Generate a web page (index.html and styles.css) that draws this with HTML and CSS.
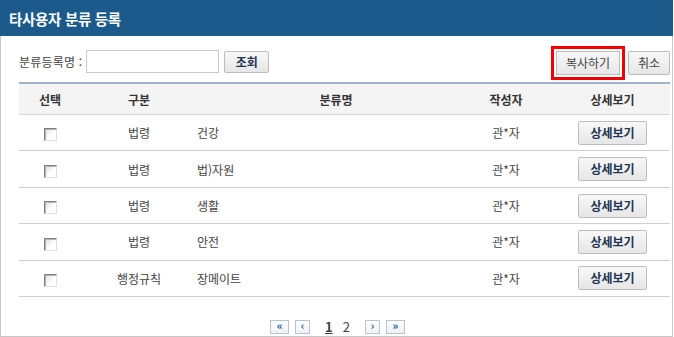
FILE: index.html
```html
<!DOCTYPE html>
<html lang="ko">
<head>
<meta charset="utf-8">
<title>타사용자 분류 등록</title>
<link rel="stylesheet" href="styles.css">
</head>
<body>
<div class="panel">
  <div class="titlebar"><h1 class="title">타사용자 분류 등록</h1></div>
  <div class="content">
    <div class="toolbar">
      <div class="search">
        <label class="label" for="q">분류등록명 :</label>
        <input id="q" class="input" type="text">
        <button class="btn btn-bold btn-search">조회</button>
      </div>
      <div class="actions">
        <button class="btn btn-copy">복사하기</button>
        <button class="btn btn-cancel">취소</button>
      </div>
    </div>
    <div class="table">
      <div class="row head">
        <div class="c c-sel">선택</div>
        <div class="c c-type">구분</div>
        <div class="c c-name c-name-h">분류명</div>
        <div class="c c-author">작성자</div>
        <div class="c c-view">상세보기</div>
      </div>
      <div class="row">
        <div class="c c-sel"><span class="chk"></span></div>
        <div class="c c-type">법령</div>
        <div class="c c-name">건강</div>
        <div class="c c-author">관*자</div>
        <div class="c c-view"><button class="btn btn-bold btn-view">상세보기</button></div>
      </div>
      <div class="row">
        <div class="c c-sel"><span class="chk"></span></div>
        <div class="c c-type">법령</div>
        <div class="c c-name">법)자원</div>
        <div class="c c-author">관*자</div>
        <div class="c c-view"><button class="btn btn-bold btn-view">상세보기</button></div>
      </div>
      <div class="row">
        <div class="c c-sel"><span class="chk"></span></div>
        <div class="c c-type">법령</div>
        <div class="c c-name">생활</div>
        <div class="c c-author">관*자</div>
        <div class="c c-view"><button class="btn btn-bold btn-view">상세보기</button></div>
      </div>
      <div class="row">
        <div class="c c-sel"><span class="chk"></span></div>
        <div class="c c-type">법령</div>
        <div class="c c-name">안전</div>
        <div class="c c-author">관*자</div>
        <div class="c c-view"><button class="btn btn-bold btn-view">상세보기</button></div>
      </div>
      <div class="row">
        <div class="c c-sel"><span class="chk"></span></div>
        <div class="c c-type">행정규칙</div>
        <div class="c c-name">장메이트</div>
        <div class="c c-author">관*자</div>
        <div class="c c-view"><button class="btn btn-bold btn-view">상세보기</button></div>
      </div>
    </div>
    <div class="pager">
      <span class="pg pg-wide">&laquo;</span>
      <span class="pg">&lsaquo;</span>
      <span class="num cur">1</span>
      <span class="num">2</span>
      <span class="pg">&rsaquo;</span>
      <span class="pg pg-wide">&raquo;</span>
    </div>
  </div>
</div>
</body>
</html>
```

FILE: styles.css
```css
* { box-sizing: border-box; }
html, body { margin: 0; padding: 0; background: #fff; }
body {
  font-family: "Noto Sans CJK KR", "Noto Sans", sans-serif;
  font-size: 12px;
  color: #444;
}
.panel {
  width: 673px;
  height: 337px;
  border: 1px solid #c8c8c8;
  border-top: none;
  display: flex;
  flex-direction: column;
}
.titlebar {
  height: 38px;
  background: #1b5a8b;
  display: flex;
  align-items: center;
  padding-left: 9px;
  margin: 0 -1px;
}
.title {
  margin: 0;
  color: #fff;
  font-size: 14.5px;
  font-weight: bold;
  letter-spacing: -0.3px;
}
.content {
  padding: 0 2px 0 18px;
  display: flex;
  flex-direction: column;
  flex: 1;
}
.toolbar {
  display: flex;
  justify-content: space-between;
  align-items: center;
  height: 46px;
  padding-top: 5px;
}
.search { display: flex; align-items: center; }
.label { color: #444; margin-right: 4px; letter-spacing: 0.2px; }
.input {
  width: 133px;
  height: 23px;
  border: 1px solid #c9c9c9;
  margin: 0 5px 0 0;
  padding: 0;
}
.btn {
  font-family: "Noto Sans CJK KR", "Noto Sans", sans-serif;
  font-size: 12px;
  border: 1px solid #bdbdbd;
  border-radius: 2px;
  background: linear-gradient(#f8f8f8, #e6e6e6);
  color: #444;
  padding: 0;
  line-height: 1;
  display: flex;
  align-items: center;
  justify-content: center;
}
.btn-bold { font-weight: bold; color: #1e3553; }
.btn-search { width: 45px; height: 22px; }
.actions { display: flex; align-items: center; gap: 8px; margin-top: 2px; }
.btn-copy {
  width: 64px;
  height: 24px;
  outline: 3px solid #f20000;
  outline-offset: 2px;
  border-radius: 0;
}
.btn-cancel { width: 42px; height: 24px; }
.table {
  border-top: 2px solid #9fb3c8;
}
.row {
  display: grid;
  grid-template-columns: 62px 116px 1fr 98px 115px;
  align-items: center;
  height: 36.4px;
  border-bottom: 1px solid #cfcfcf;
}
.row.head {
  height: 31px;
  background: #f4f4f4;
  font-weight: bold;
  color: #333;
  border-bottom: 1px solid #d6d6d6;
}
.c { text-align: center; }
.c-name { text-align: left; }
.c-name-h { text-align: center; padding-left: 18px; }
.c-view { display: flex; justify-content: center; }
.btn-view { width: 69px; height: 24px; }
.chk {
  display: inline-block;
  width: 13px;
  height: 13px;
  vertical-align: middle;
  border: 1px solid;
  border-color: #7f7f7f #e0e0e0 #e0e0e0 #7f7f7f;
  background: linear-gradient(135deg, #dcdcdc, #ffffff 60%);
  box-shadow: inset 1px 1px 0 #b5b5b5;
}
.pager {
  margin-top: 20px;
  display: flex;
  justify-content: center;
  align-items: center;
  gap: 6px;
  padding-right: 14px;
}
.pg {
  display: inline-flex;
  align-items: center;
  justify-content: center;
  width: 15px;
  height: 14px;
  border: 1px solid #b9c4d2;
  background: linear-gradient(#ffffff, #eef1f5);
  color: #2a5a9c;
  font-weight: bold;
  font-size: 11px;
  line-height: 1;
  padding-bottom: 2px;
}
.pg-wide { width: 19px; }
.num { font-size: 13px; color: #444; padding: 0 3px; }
.num.cur { text-decoration: underline; font-weight: bold; margin-left: 6px; }
.pager .num + .num { margin-right: 6px; margin-left: -2px; }
```
